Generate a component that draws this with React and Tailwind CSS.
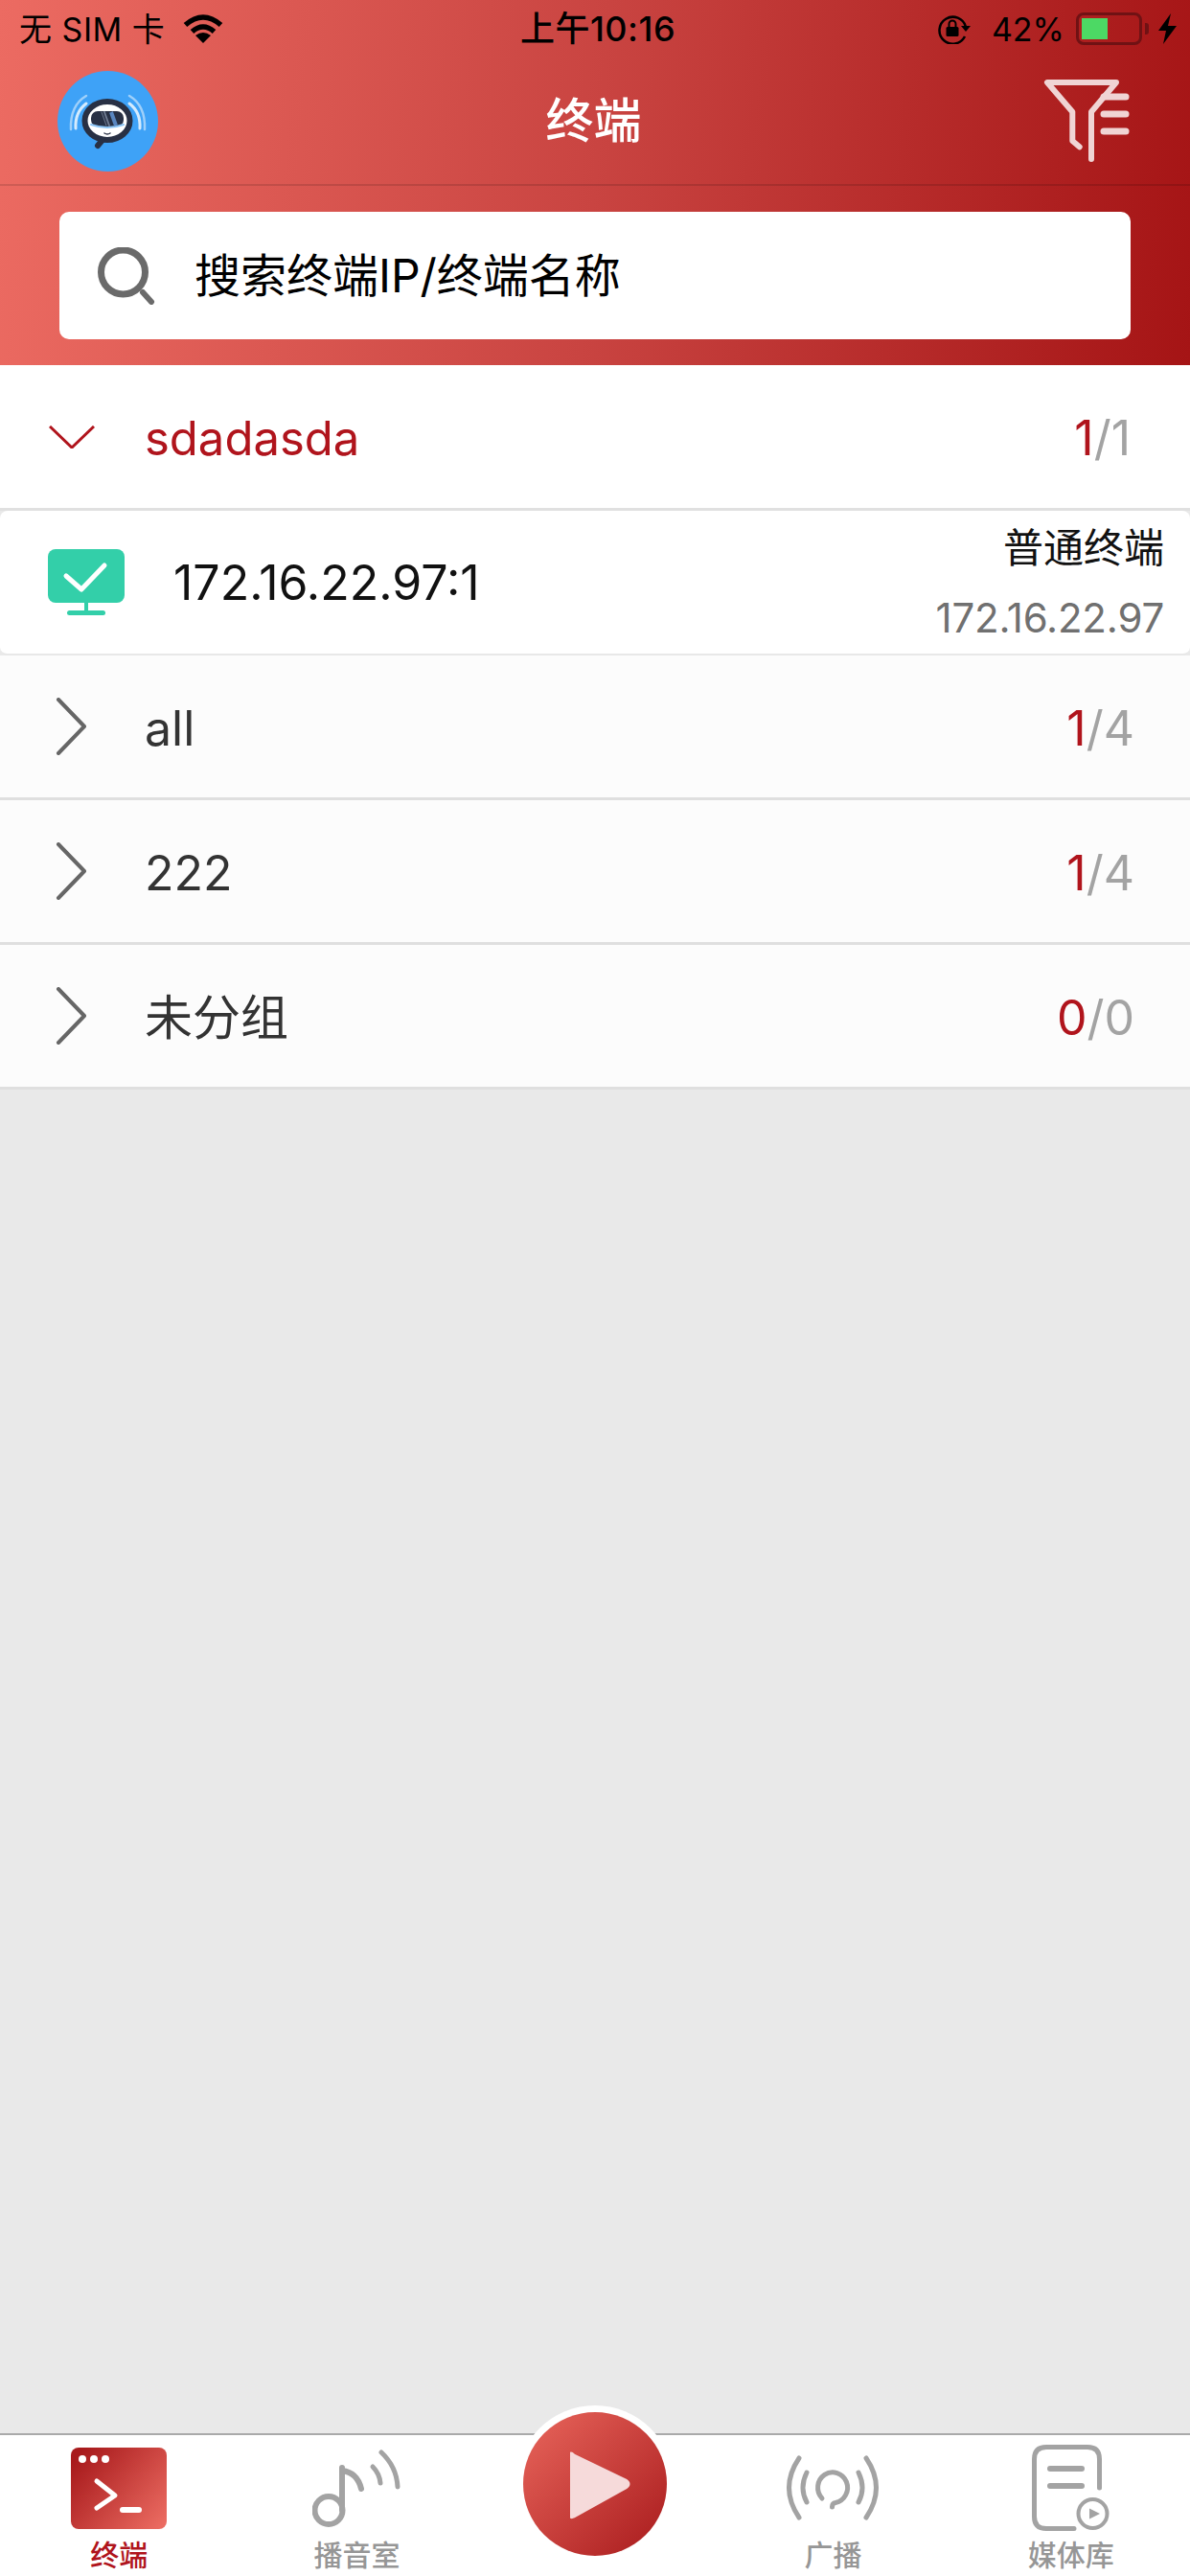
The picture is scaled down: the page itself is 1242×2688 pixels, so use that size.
import React from 'react';

// tab bar icons, coordinates read off the screenshot
const TerminalIcon = () => (
  <svg width="100" height="85" viewBox="0 0 100 85">
    <defs>
      <linearGradient id="termGrad" x1="0" y1="0.2" x2="1" y2="0.9">
        <stop offset="0" stopColor="#a81a1c" />
        <stop offset="1" stopColor="#eb6b61" />
      </linearGradient>
    </defs>
    <rect width="100" height="85" rx="8" fill="url(#termGrad)" />
    <circle cx="12" cy="12" r="4" fill="#fff" />
    <circle cx="24" cy="12" r="4" fill="#fff" />
    <circle cx="36" cy="12" r="4" fill="#fff" />
    <path d="M27 35 46 50 27 63" fill="none" stroke="#fff" strokeWidth="5" strokeLinecap="round" strokeLinejoin="round" />
    <path d="M54 65H71" fill="none" stroke="#fff" strokeWidth="6" strokeLinecap="round" />
  </svg>
);

const StudioIcon = () => (
  <svg width="93" height="81" viewBox="0 0 93 81" fill="none" stroke="#a3a3a3" strokeLinecap="round">
    <circle cx="17" cy="63.5" r="14.5" strokeWidth="6" />
    <path d="M31 63V19" strokeWidth="6" />
    <path d="M31 22Q47 24 51 41" strokeWidth="6" />
    <path d="M63 18Q70 25 71 35" strokeWidth="5" />
    <path d="M72 3Q88 18 89 39" strokeWidth="5" />
  </svg>
);

const BroadcastIcon = () => (
  <svg width="100" height="70" viewBox="0 0 100 70" fill="none" stroke="#a3a3a3" strokeLinecap="round">
    <path d="M15 4Q-6 35 15 66" strokeWidth="5" />
    <path d="M85 4Q106 35 85 66" strokeWidth="5" />
    <path d="M23 19Q15 35 23 50" strokeWidth="5" />
    <path d="M77 19Q85 35 77 50" strokeWidth="5" />
    <path d="M39 46A15.5 16 0 1 1 53 50.5Q49.5 51 49.5 55" strokeWidth="5" />
  </svg>
);

const MediaIcon = () => (
  <svg width="81" height="90" viewBox="0 0 81 90" fill="none" stroke="#a3a3a3" strokeLinecap="round">
    <path d="M70.5 45V15Q70.5 2.5 58 2.5H15Q2.5 2.5 2.5 15V75Q2.5 87.5 15 87.5H44" strokeWidth="5" />
    <path d="M19 25H52" strokeWidth="6" />
    <path d="M19 43H52" strokeWidth="6" />
    <circle cx="63.5" cy="72" r="15" strokeWidth="4" />
    <path d="M60 66.5 71 72 60 77.5Z" fill="#a3a3a3" stroke="none" />
  </svg>
);

const Avatar = () => (
  <svg width="105" height="105" viewBox="0 0 105 105" fill="none" strokeLinecap="round">
    <circle cx="52.5" cy="52.5" r="52.5" fill="#3ea2f7" />
    <path d="M30 26Q13 36 14 61" stroke="#9fd0fa" strokeWidth="2.5" />
    <path d="M75 26Q92 36 91 61" stroke="#9fd0fa" strokeWidth="2.5" />
    <path d="M30 34Q18 43 19 60" stroke="#d5ebfd" strokeWidth="3" />
    <path d="M75 34Q87 43 86 60" stroke="#d5ebfd" strokeWidth="3" />
    <ellipse cx="52" cy="52" rx="23.5" ry="20" fill="#fff" stroke="#283044" strokeWidth="6" />
    <rect x="35" y="42" width="34" height="16" rx="7" fill="#283044" />
    <path d="M35 56Q52 62 69 56" stroke="#8cc4f5" strokeWidth="2" />
    <path d="M46 43 51 57" stroke="#6f7a90" strokeWidth="1" />
    <path d="M49 43 54 57" stroke="#6f7a90" strokeWidth="2" />
    <path d="M56 43 61 57" stroke="#5a86c0" strokeWidth="4" strokeLinecap="butt" />
    <path d="M49 65Q52 67 55 65" stroke="#283044" strokeWidth="1.5" />
    <path d="M47 72 42 78" stroke="#283044" strokeWidth="6" />
  </svg>
);

const ChevronRight = () => (
  <svg width="34" height="60" viewBox="0 0 34 60" fill="none" stroke="#666" strokeWidth="4" strokeLinecap="round" strokeLinejoin="round">
    <path d="M3 2 30 30 3 58" />
  </svg>
);

const groups = [
  { name: 'all', on: 1, total: 4 },
  { name: '222', on: 1, total: 4 },
  { name: '未分组', on: 0, total: 0 },
];

const Count = ({ on, total }) => (
  <span className="text-[#a3a3a3]">
    <span className="text-[#b0141c]">{on}</span>/{total}
  </span>
);

const tabs = [
  { label: '终端', icon: <TerminalIcon />, active: true },
  { label: '播音室', icon: <StudioIcon /> },
  { label: '', icon: null },
  { label: '广播', icon: <BroadcastIcon /> },
  { label: '媒体库', icon: <MediaIcon /> },
];

export default function App() {
  return (
    <div className="w-[1242px] h-[2688px] flex flex-col overflow-hidden bg-[#e9e9e9] font-['Inter','Noto_Sans_CJK_SC',sans-serif]">
      <header className="h-[381px] shrink-0 bg-[linear-gradient(95deg,#ec6b62_0%,#c94441_50%,#a51415_100%)]">
        {/* status bar */}
        <div className="h-[60px] grid grid-cols-[1fr_auto_1fr] items-center pl-[20px] pr-[14px] text-black text-[34px]">
          <div className="flex items-center gap-[19px]">
            <span className="tracking-[0.5px]">无 SIM 卡</span>
            <svg width="42" height="30" viewBox="0 0 42 30">
              <path d="M2.5 11Q21 -5 39.5 11" fill="none" stroke="#000" strokeWidth="5.5" />
              <path d="M9.5 18Q21 8 32.500 18" fill="none" stroke="#000" strokeWidth="5.5" />
              <path d="M21 30 13 22Q21 16 29 22Z" fill="#000" />
            </svg>
          </div>
          <span className="font-medium text-[36px] tracking-[0.5px]">上午10:16</span>
          <div className="flex items-center justify-end">
            <svg width="35" height="32" viewBox="0 0 35 32" fill="none">
              <path d="M29 24A14 14 0 1 1 30 14" stroke="#000" strokeWidth="2.5" />
              <path d="M25 13H35L30 19Z" fill="#000" />
              <rect x="9.500" y="14" width="13" height="10" rx="1.500" fill="#000" />
              <path d="M12.500 14V11A3.500 3.500 0 0 1 19.500 11V14" stroke="#000" strokeWidth="2" />
            </svg>
            <span className="ml-[22px]">42%</span>
            <div className="ml-[12px] w-[69px] h-[34px] rounded-[8px] border-[3px] border-[#701214] p-[3px]">
              <div className="w-[27px] h-full bg-[#4cd964]" />
            </div>
            <div className="ml-[3px] w-[4px] h-[12px] rounded-r-[3px] bg-[#701214]" />
            <svg className="ml-[10px]" width="19" height="32" viewBox="0 0 19 32">
              <path d="M13 0 0 18H8L5 32 19 13H10Z" fill="#000" />
            </svg>
          </div>
        </div>

        {/* nav */}
        <div className="h-[134px] grid grid-cols-3 items-center pl-[60px] pr-[63px] border-b-2 border-[#0000001f]">
          <Avatar />
          <h1 className="text-center text-white text-[50px] font-medium">终端</h1>
          <svg className="justify-self-end" width="92" height="90" viewBox="27 21 92 90" fill="none" stroke="#f0d4d4" strokeWidth="6" strokeLinecap="round" strokeLinejoin="round">
            <path d="M66.700 93.300 59.300 87V56.700L33 26H105L79 56.700V106" />
            <path d="M92 41H115" strokeWidth="7" />
            <path d="M92 59H115" strokeWidth="7" />
            <path d="M92 77H115" strokeWidth="7" />
          </svg>
        </div>

        {/* search */}
        <div className="pt-[27px] px-[62px]">
          <div className="h-[133px] rounded-[10px] bg-white flex items-center pl-[40px]">
            <svg width="60" height="60" viewBox="0 0 60 60" fill="none" stroke="#6a6a6a" strokeLinecap="round">
              <circle cx="26.500" cy="26" r="23" strokeWidth="7" />
              <path d="M47 47 56 57" strokeWidth="6" />
            </svg>
            <span className="ml-[41px] text-[48px] text-black">搜索终端IP/终端名称</span>
          </div>
        </div>
      </header>

      {/* terminal groups */}
      <main className="flex-1 text-[50px]">
        <div className="h-[152px] bg-white border-b-[3px] border-[#e0e0e0] flex items-center pl-[51px] pr-[62px]">
          <svg width="48" height="24" viewBox="0 0 48 24" fill="none" stroke="#b0141c" strokeWidth="3">
            <path d="M1 1 24 23 47 1" />
          </svg>
          <span className="ml-[52px] pt-[4px] flex-1 text-[49px] text-[#b0141c]">sdadasda</span>
          <span className="pt-[4px]">
            <Count on={1} total={1} />
          </span>
        </div>

        <div className="h-[151px] bg-white rounded-[8px] border-b-2 border-[#e8e8e8] flex items-center pl-[50px] pr-[27px]">
          <svg width="80" height="69" viewBox="0 0 80 69">
            <rect width="80" height="56" rx="8" fill="#33cfa9" />
            <path d="M19 28 35 42 59 17" fill="none" stroke="#fff" strokeWidth="5" strokeLinecap="round" strokeLinejoin="round" />
            <rect x="38" y="56" width="4" height="9" fill="#33cfa9" />
            <rect x="20" y="64" width="40" height="5" rx="2.500" fill="#33cfa9" />
          </svg>
          <span className="ml-[51px] pt-[2px] flex-1 text-[#111]">172.16.22.97:1</span>
          <div className="flex flex-col items-end gap-[25px]">
            <span className="text-[42px] leading-[50px] text-[#111]">普通终端</span>
            <span className="text-[42px] leading-[46px] tracking-[-0.2px] text-[#707070]">172.16.22.97</span>
          </div>
        </div>

        {groups.map((g) => (
          <div key={g.name} className="h-[151px] bg-[#fcfcfc] border-b-[3px] border-[#dfdfdf] flex items-center pl-[58px] pr-[58px]">
            <ChevronRight />
            <span className="ml-[59px] pt-[4px] flex-1 text-[#333]">{g.name}</span>
            <span className="pt-[4px]">
              <Count on={g.on} total={g.total} />
            </span>
          </div>
        ))}
      </main>

      {/* tab bar */}
      <nav className="h-[149px] shrink-0 bg-white border-t-2 border-[#aaaaaa] grid grid-cols-5">
        {tabs.map((t, i) =>
          t.icon ? (
            <div key={i} className="flex flex-col items-center">
              <div className="h-[110px] flex items-center justify-center">{t.icon}</div>
              <span className={t.active ? 'text-[30px] leading-[30px] font-medium text-[#b0141c]' : 'text-[30px] leading-[30px] font-medium text-[#969696]'}>
                {t.label}
              </span>
            </div>
          ) : (
            <div key={i} className="relative">
              <button className="absolute left-1/2 -translate-x-1/2 -top-[31px] w-[164px] h-[164px] rounded-full bg-white flex items-center justify-center">
                <span className="w-[150px] h-[150px] rounded-full bg-[linear-gradient(135deg,#e9665c,#a81a1c)] flex items-center justify-center">
                  <svg className="ml-[14px]" width="66" height="76" viewBox="0 0 66 76">
                    <path d="M4 8 58 34Q64 38 58 42L4 72Q0 74 0 70V8Q0 4 4 8Z" fill="#f6dada" stroke="#f6dada" strokeWidth="3" strokeLinejoin="round" />
                  </svg>
                </span>
              </button>
            </div>
          )
        )}
      </nav>
    </div>
  );
}
